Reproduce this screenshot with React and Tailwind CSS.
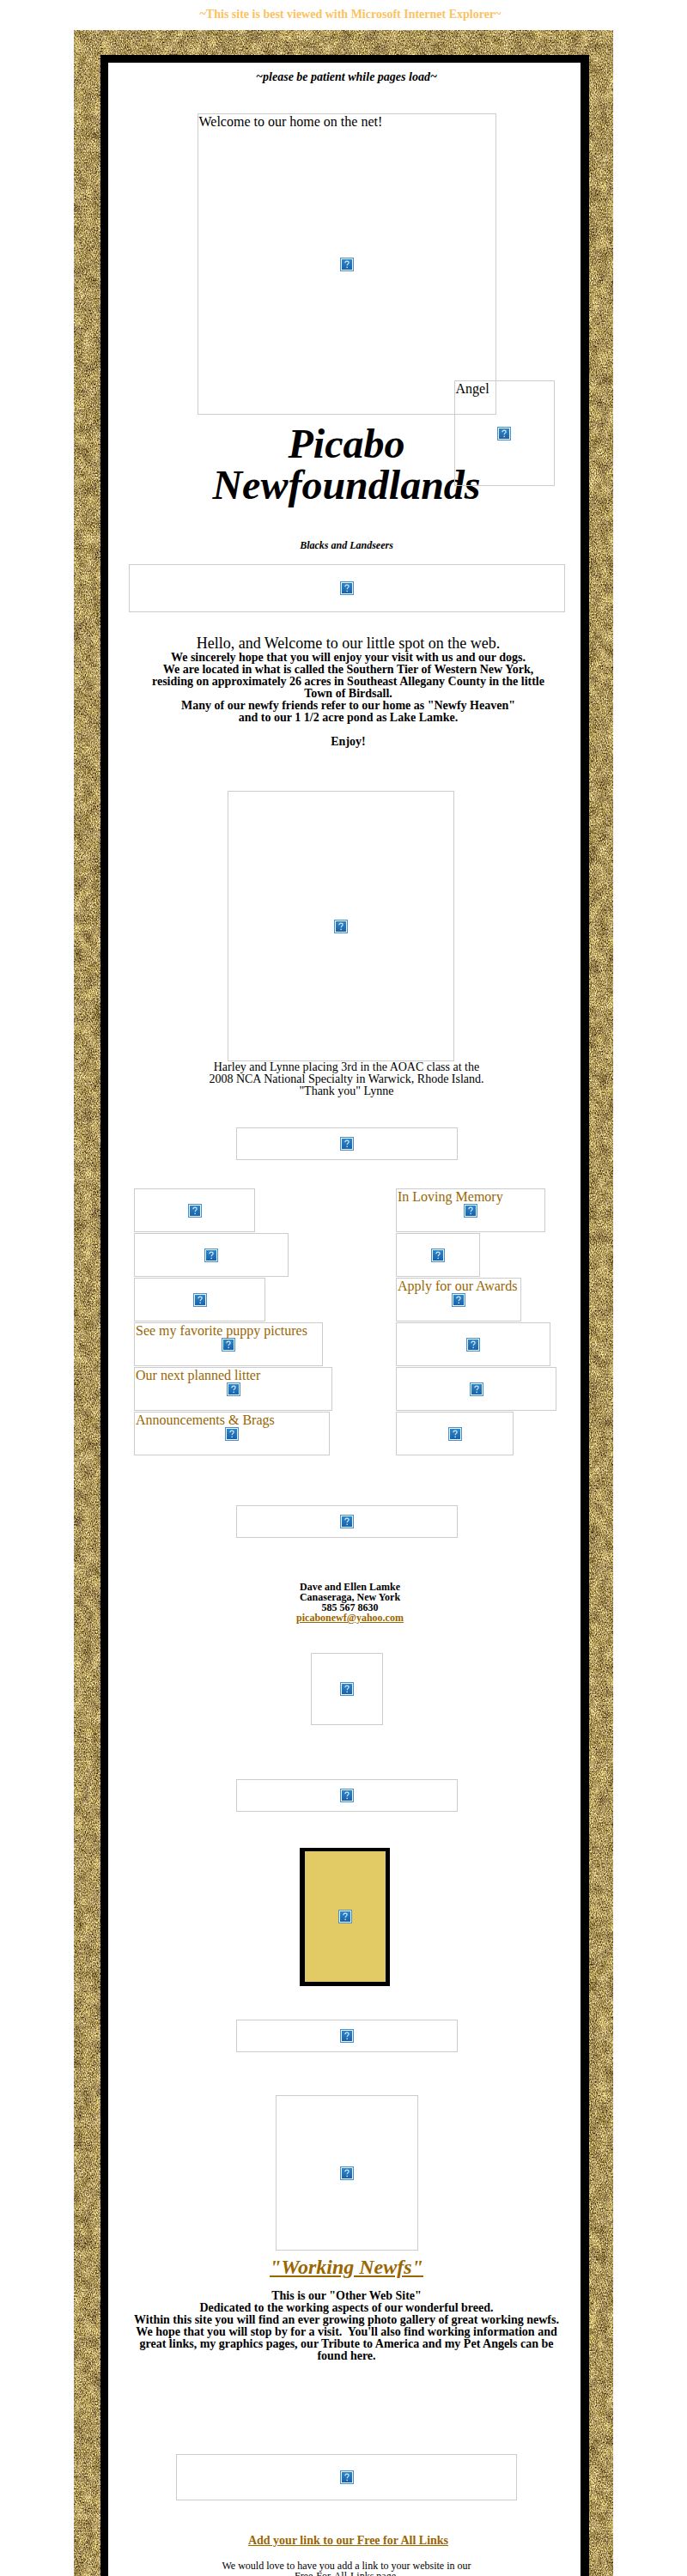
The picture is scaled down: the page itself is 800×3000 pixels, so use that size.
function MissingIcon() {
  return (
    <svg viewBox="0 0 16 16" className="size-4 shrink-0" aria-hidden="true">
      <defs>
        <linearGradient id="badge" x1="0" y1="0" x2="0" y2="1">
          <stop offset="0" stopColor="#2f86c6" />
          <stop offset="1" stopColor="#1b62a8" />
        </linearGradient>
      </defs>
      <rect width="16" height="16" fill="#4a90cc" />
      <rect x="1" y="1" width="14" height="14" fill="#e8f3fb" />
      <rect x="2" y="2" width="12" height="12" fill="url(#badge)" />
      <path d="M5.900 6.200C5.900 4.700 6.800 4.100 8 4.100c1.200 0 2.100.7 2.100 1.800 0 1.400-1.900 1.600-1.900 3.300" fill="none" stroke="#cfe6f7" strokeWidth="1.200" />
      <rect x="7.500" y="10.700" width="1.400" height="1.400" fill="#cfe6f7" />
    </svg>
  );
}

function Missing({ size, alt, className = "border-[#cccccc]" }) {
  return (
    <div className={`relative flex max-w-full items-center justify-center border ${size} ${className}`}>
      {alt && <span className="absolute left-px top-0 whitespace-nowrap text-base leading-[18px]">{alt}</span>}
      <MissingIcon />
    </div>
  );
}

function GoldTexture() {
  return (
    <svg className="absolute inset-0 h-full w-full" aria-hidden="true">
      <filter id="gold" x="0" y="0" width="100%" height="100%" colorInterpolationFilters="sRGB">
        <feTurbulence type="fractalNoise" baseFrequency="0.83 0.57" numOctaves="2" seed="7" result="grain" />
        <feTurbulence type="fractalNoise" baseFrequency="0.09 0.07" numOctaves="2" seed="3" result="cloud" />
        <feComposite in="grain" in2="cloud" operator="arithmetic" k1="0" k2="0.85" k3="0.25" k4="0" />
        <feColorMatrix
          type="matrix"
          values="1.700 0.5 0 0 -0.430
                  1.650 0.5 0 0 -0.490
                  1.300 0.2 0.300 0 -0.540
                  0 0 0 0 1"
        />
      </filter>
      <rect width="100%" height="100%" filter="url(#gold)" />
    </svg>
  );
}

const leftLinks = [
  { size: "h-[51px] w-[141px]" },
  { size: "h-[51px] w-[180px]" },
  { size: "h-[51px] w-[153px]" },
  { size: "h-[51px] w-[220px]", alt: "See my favorite puppy pictures" },
  { size: "h-[51px] w-[231px]", alt: "Our next planned litter" },
  { size: "h-[51px] w-[228px]", alt: "Announcements & Brags" },
];

const rightLinks = [
  { size: "h-[51px] w-[174px]", alt: "In Loving Memory" },
  { size: "h-[51px] w-[98px]" },
  { size: "h-[51px] w-[146px]", alt: "Apply for our Awards" },
  { size: "h-[51px] w-[180px]" },
  { size: "h-[51px] w-[187px]" },
  { size: "h-[51px] w-[137px]" },
];

function LinkColumn({ items }) {
  return (
    <nav className="flex flex-col items-start gap-px text-[#996600]">
      {items.map((item, i) => (
        <a key={i} href="#" className="block" aria-label={item.alt || "Page link"}>
          <Missing {...item} />
        </a>
      ))}
    </nav>
  );
}

function Divider() {
  return <Missing size="h-[38px] w-[258px]" />;
}

export default function App() {
  return (
    <div className="bg-white font-['Liberation_Serif',serif] text-black">
      <p className="pt-[9px] pb-[10px] pl-4 text-center text-[14px] leading-4 font-bold text-[#fbc25f]">
        ~This site is best viewed with Microsoft Internet Explorer~
      </p>
      <div className="relative mx-auto w-[628px] max-w-full pt-[29px] pr-[28px] pl-[31px]">
        <GoldTexture />
        <main className="relative flex flex-col items-center border-t-[9px] border-r-[10px] border-l-[9px] border-black bg-white pb-4 pl-[5px] text-center">
          <p className="mt-[9px] text-[14px] leading-4 font-bold italic">~please be patient while pages load~</p>

          <div className="relative mt-[34px]">
            <Missing size="h-[351px] w-[348px]" alt="Welcome to our home on the net!" />
            <div className="absolute top-[311px] left-[299px] z-10">
              <Missing size="h-[123px] w-[117px]" alt="Angel" />
            </div>
          </div>

          <h1 className="mt-[10px] text-5xl leading-[48px] font-bold italic">
            Picabo
            <br />
            Newfoundlands
          </h1>
          <p className="mt-[39px] mb-[15px] text-[12px] leading-[14px] font-bold italic">Blacks and Landseers</p>
          <Missing size="h-[56px] w-[508px]" />

          <section className="mt-[26px] mb-[50px] w-[484px] max-w-full pl-1 text-[14px] leading-[14px] font-bold">
            <p className="text-[18px] leading-5 font-normal">Hello, and Welcome to our little spot on the web.</p>
            <p>We sincerely hope that you will enjoy your visit with us and our dogs.</p>
            <p>
              We are located in what is called the Southern Tier of Western New York, residing on approximately 26 acres
              in Southeast Allegany County in the little Town of Birdsall.
            </p>
            <p>Many of our newfy friends refer to our home as "Newfy Heaven"</p>
            <p>and to our 1 1/2 acre pond as Lake Lamke.</p>
            <p className="mt-[14px]">Enjoy!</p>
          </section>

          <div className="pr-[13px]">
            <Missing size="h-[315px] w-[264px]" />
          </div>
          <p className="mb-[35px] text-[14px] leading-[14px]">
            Harley and Lynne placing 3rd in the AOAC class at the
            <br />
            2008 NCA National Specialty in Warwick, Rhode Island.
            <br />
            "Thank you" Lynne
          </p>
          <Divider />

          <div className="mt-[33px] mb-[58px] grid w-full grid-cols-[305px_1fr] pl-[25px] text-left">
            <LinkColumn items={leftLinks} />
            <LinkColumn items={rightLinks} />
          </div>

          <Divider />

          <address className="mt-[51px] mb-[35px] pl-[8px] text-[12px] leading-3 font-bold not-italic">
            Dave and Ellen Lamke
            <br />
            Canaseraga, New York
            <br />
            585 567 8630
            <br />
            <a href="mailto:picabonewf@yahoo.com" className="text-[#996600] underline">
              picabonewf@yahoo.com
            </a>
          </address>

          <Missing size="h-[84px] w-[84px]" />
          <div className="mt-[63px]">
            <Divider />
          </div>

          <div className="mt-[42px] mr-1 mb-[39px] border-t-4 border-r-[5px] border-b-[5px] border-l-[6px] border-black bg-[#e2cb65]">
            <Missing size="h-[152px] w-[94px]" className="border-[#dcc578]" />
          </div>

          <Divider />
          <div className="mt-[50px]">
            <Missing size="h-[181px] w-[166px]" />
          </div>

          <h2 className="mt-[5px] text-2xl leading-7 font-bold italic">
            <a href="#" className="text-[#996600] underline">
              "Working Newfs"
            </a>
          </h2>

          <section className="mt-[13px] mb-[107px] w-[510px] max-w-full text-[14px] leading-[14px] font-bold">
            <p>This is our "Other Web Site"</p>
            <p>Dedicated to the working aspects of our wonderful breed.</p>
            <p>
              Within this site you will find an ever growing photo gallery of great working newfs. We hope that you will
              stop by for a visit.&nbsp; You'll also find working information and great links, my graphics pages, our
              Tribute to America and my Pet Angels can be found here.
            </p>
          </section>

          <Missing size="h-[54px] w-[397px]" />

          <a href="#" className="mt-[39px] ml-1 text-[14px] leading-4 font-bold text-[#996600] underline">
            Add your link to our Free for All Links
          </a>
          <p className="mt-[15px] text-[12px] leading-3">
            We would love to have you add a link to your website in our
            <br />
            Free-For-All-Links page.
          </p>
        </main>
      </div>
    </div>
  );
}
